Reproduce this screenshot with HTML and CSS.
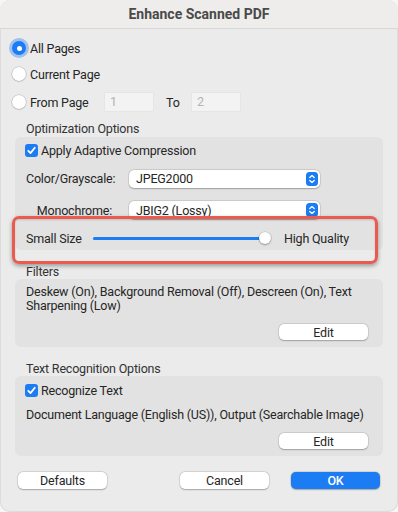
FILE: index.html
```html
<!DOCTYPE html>
<html lang="en">
<head>
    <meta charset="UTF-8">
    <title>Enhance Scanned PDF</title>
    <link rel="stylesheet" href="styles.css">
</head>
<body>
    <div class="window">
        <div class="titlebar">Enhance Scanned PDF</div>

        <div class="pages">
            <div class="radio-row">
                <span class="radio on"></span>
                <span>All Pages</span>
            </div>
            <div class="radio-row">
                <span class="radio"></span>
                <span>Current Page</span>
            </div>
            <div class="radio-row from">
                <span class="radio"></span>
                <span class="from-label">From Page</span>
                <span class="field">1</span>
                <span class="to-label">To</span>
                <span class="field">2</span>
            </div>
        </div>

        <div class="section">
            <div class="section-title first">Optimization Options</div>
            <div class="group opt">
                <div class="check-row">
                    <span class="checkbox"><svg width="13" height="13" viewBox="0 0 13 13"><path d="M3.3 6.8 L5.5 9.1 L9.8 3.8" fill="none" stroke="#fff" stroke-width="1.8" stroke-linecap="round" stroke-linejoin="round"/></svg></span>
                    <span>Apply Adaptive Compression</span>
                </div>
                <div class="form-row color">
                    <span class="form-label">Color/Grayscale:</span>
                    <div class="popup">
                        <span>JPEG2000</span>
                        <span class="stepper"><svg width="12" height="14" viewBox="0 0 12 14"><path d="M3.8 5.6 L6 3.6 L8.2 5.6 M3.8 8.4 L6 10.4 L8.2 8.4" fill="none" stroke="#fff" stroke-width="1.3" stroke-linecap="round" stroke-linejoin="round"/></svg></span>
                    </div>
                </div>
                <div class="form-row mono">
                    <span class="form-label">Monochrome:</span>
                    <div class="popup">
                        <span>JBIG2 (Lossy)</span>
                        <span class="stepper"><svg width="12" height="14" viewBox="0 0 12 14"><path d="M3.8 5.6 L6 3.6 L8.2 5.6 M3.8 8.4 L6 10.4 L8.2 8.4" fill="none" stroke="#fff" stroke-width="1.3" stroke-linecap="round" stroke-linejoin="round"/></svg></span>
                    </div>
                </div>
                <div class="slider-row">
                    <span class="slider-label">Small Size</span>
                    <div class="slider">
                        <div class="track-fill" style="width: 172px"></div>
                        <div class="knob"></div>
                    </div>
                    <span>High Quality</span>
                    <div class="highlight"></div>
                </div>
            </div>

            <div class="section-title">Filters</div>
            <div class="group filters">
                <p class="desc">Deskew (On), Background Removal (Off), Descreen (On), Text Sharpening (Low)</p>
                <div class="group-actions">
                    <button class="btn edit">Edit</button>
                </div>
            </div>

            <div class="section-title">Text Recognition Options</div>
            <div class="group ocr">
                <div class="check-row small">
                    <span class="checkbox"><svg width="13" height="13" viewBox="0 0 13 13"><path d="M3.3 6.8 L5.5 9.1 L9.8 3.8" fill="none" stroke="#fff" stroke-width="1.8" stroke-linecap="round" stroke-linejoin="round"/></svg></span>
                    <span>Recognize Text</span>
                </div>
                <p class="desc single">Document Language (English (US)), Output (Searchable Image)</p>
                <div class="group-actions">
                    <button class="btn edit">Edit</button>
                </div>
            </div>
        </div>

        <div class="footer">
            <button class="btn">Defaults</button>
            <div class="spacer"></div>
            <button class="btn">Cancel</button>
            <button class="btn primary">OK</button>
        </div>
    </div>
</body>
</html>
```

FILE: styles.css
```css
body {
    margin: 0;
    padding: 0;
    background: #f6f6f6;
    font-family: Roboto, "Liberation Sans", sans-serif;
    font-size: 12.5px;
    letter-spacing: -0.2px;
    color: #262626;
}

.window {
    width: 398px;
    height: 512px;
    background: #ebebeb;
    border-radius: 10px;
    overflow: hidden;
    box-sizing: border-box;
    box-shadow: inset 0 0 0 1px #dcdcdc;
}

.titlebar {
    height: 28px;
    line-height: 28px;
    text-align: center;
    font-weight: 700;
    font-size: 14px;
    letter-spacing: 0;
    color: #4a4a4a;
    background: #eeedeb;
    border-bottom: 1px solid #d7d7d7;
}

/* page range */

.pages {
    padding: 6px 0 0 12px;
}

.radio-row {
    height: 26px;
    display: flex;
    align-items: center;
    gap: 4px;
}

.radio-row.from {
    height: 30px;
}

.radio {
    width: 14px;
    height: 14px;
    border-radius: 50%;
    background: #fff;
    box-sizing: border-box;
    box-shadow: 0 0 0 0.5px rgba(0, 0, 0, 0.18), 0 0.5px 1.5px rgba(0, 0, 0, 0.2);
    flex-shrink: 0;
    position: relative;
}

.radio.on {
    background: #1b7cf4;
    box-shadow: 0 0 0 3px rgba(70, 140, 240, 0.45);
}

.radio.on::after {
    content: "";
    position: absolute;
    left: 4.5px;
    top: 4.5px;
    width: 5px;
    height: 5px;
    border-radius: 50%;
    background: #fff;
}

.from-label {
    width: 71px;
}

.field {
    width: 48px;
    height: 18px;
    line-height: 18px;
    box-sizing: border-box;
    padding-left: 5px;
    background: #f3f3f3;
    color: #b4b4b4;
    box-shadow: 0 0 0 0.5px rgba(0, 0, 0, 0.05);
}

.to-label {
    width: 22px;
    margin-left: 9px;
}

/* grouped sections */

.section {
    padding: 0 15px;
}

.section-title {
    height: 15px;
    line-height: 15px;
    padding-left: 11px;
    margin-top: 14px;
    color: #333;
}

.section-title.first {
    margin-top: 4px;
    height: 16px;
    line-height: 16px;
}

.group {
    background: #e2e2e2;
    border-radius: 6px;
    padding: 0 15px 0 11px;
}

.check-row {
    height: 26px;
    display: flex;
    align-items: center;
    gap: 3px;
    margin-left: -1px;
}

.check-row.small {
    height: 20px;
}

.checkbox {
    width: 13px;
    height: 13px;
    border-radius: 3px;
    background: #1b7cf4;
    display: flex;
}

.form-row {
    display: flex;
    align-items: center;
    gap: 17px;
}

.form-row.color {
    height: 31px;
}

.form-row.mono {
    height: 32px;
}

.form-label {
    width: 86px;
    text-align: right;
    white-space: nowrap;
}

.popup {
    width: 191px;
    height: 18px;
    box-sizing: border-box;
    background: #fff;
    border-radius: 5px;
    box-shadow: 0 0 0 0.5px rgba(0, 0, 0, 0.12), 0 0.5px 1.5px rgba(0, 0, 0, 0.25);
    display: flex;
    align-items: center;
    justify-content: space-between;
    padding: 0 2px 0 7px;
}

.stepper {
    width: 12px;
    height: 14px;
    border-radius: 3.5px;
    background: #1b7cf4;
    display: flex;
}

.slider-row {
    position: relative;
    height: 24px;
    display: flex;
    align-items: center;
}

.slider-label {
    width: 67px;
}

.slider {
    position: relative;
    width: 177px;
    height: 3px;
    border-radius: 2px;
    background: #c9c9c9;
    margin-right: 14px;
}

.track-fill {
    height: 3px;
    border-radius: 2px;
    background: #1b7cf4;
}

.knob {
    position: absolute;
    left: 166px;
    top: -5px;
    width: 12px;
    height: 12px;
    border-radius: 50%;
    background: #fff;
    box-shadow: 0 0 0 0.5px rgba(0, 0, 0, 0.15), 0 1px 2px rgba(0, 0, 0, 0.3);
}

/* red annotation box drawn over the slider row */
.highlight {
    position: absolute;
    left: -14px;
    top: -10px;
    width: 366px;
    height: 48px;
    box-sizing: border-box;
    border: 3px solid #ea5a4e;
    border-radius: 7px;
    box-shadow: 0 2px 4px rgba(0, 0, 0, 0.35), inset 0 1px 2px rgba(0, 0, 0, 0.15);
}

.desc {
    margin: 0;
    line-height: 14px;
}

.filters {
    padding-top: 6px;
    padding-bottom: 7px;
}

.ocr {
    padding-top: 4px;
    padding-bottom: 7px;
}

.desc.single {
    margin-top: 8px;
    white-space: nowrap;
}

.group-actions {
    display: flex;
    justify-content: flex-end;
    margin-top: 11px;
}

/* push buttons */

.btn {
    width: 89px;
    height: 17px;
    padding: 0;
    border: none;
    border-radius: 5px;
    background: #fff;
    font-family: inherit;
    font-size: 12.5px;
    letter-spacing: inherit;
    color: #262626;
    box-shadow: 0 0 0 0.5px rgba(0, 0, 0, 0.12), 0 0.5px 1.5px rgba(0, 0, 0, 0.25);
}

.btn.edit {
    height: 16px;
}

.btn.primary {
    background: #1b7cf4;
    color: #fff;
    font-weight: 500;
}

.footer {
    display: flex;
    gap: 22px;
    padding: 16px 18px 0 18px;
}

.spacer {
    flex: 1;
}
```
